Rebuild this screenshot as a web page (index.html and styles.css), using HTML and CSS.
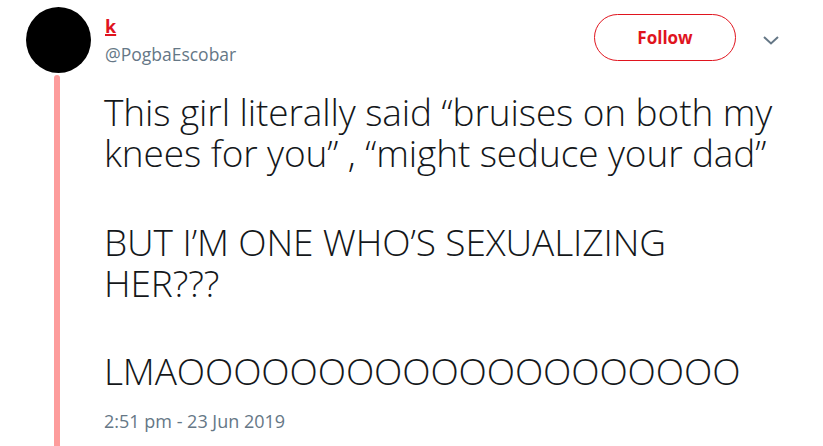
FILE: index.html
```html
<!DOCTYPE html>
<html>
<head>
<meta charset="utf-8">
<link rel="stylesheet" href="styles.css">
</head>
<body>
<div class="tweet">
  <div class="rail">
    <div class="avatar"></div>
    <div class="thread"></div>
  </div>
  <div class="main">
    <div class="header">
      <div class="who">
        <div class="name">k</div>
        <div class="handle">@PogbaEscobar</div>
      </div>
      <div class="actions">
        <button class="follow">Follow</button>
        <svg class="chev" width="16" height="9" viewBox="0 0 16 9"><polyline points="1,1 8,7.5 15,1" fill="none" stroke="#657786" stroke-width="2"/></svg>
      </div>
    </div>
    <div class="text">
      <p class="p1">This girl literally said “bruises on both my knees for you” , “might seduce your dad”</p>
      <p class="p2">BUT I’M ONE WHO’S SEXUALIZING HER???</p>
      <p class="p3">LMAOOOOOOOOOOOOOOOOOOOO</p>
    </div>
    <div class="time">2:51 pm - 23 Jun 2019</div>
  </div>
</div>
</body>
</html>
```

FILE: styles.css
```css
html, body {
  margin: 0;
  padding: 0;
  background: #ffffff;
}
body {
  font-family: "Open Sans", "Noto Sans", sans-serif;
  width: 823px;
  height: 446px;
  overflow: hidden;
}
.tweet {
  display: flex;
  height: 446px;
  padding-left: 26px;
  box-sizing: border-box;
}
.rail {
  width: 65px;
  display: flex;
  flex-direction: column;
  padding-top: 7px;
  flex: none;
}
.avatar {
  width: 65px;
  height: 66px;
  border-radius: 50%;
  background: #000;
}
.thread {
  width: 6px;
  margin-left: 28px;
  margin-top: 2px;
  flex: 1;
  background: #fd9c9c;
  border-radius: 3px 3px 0 0;
}
.main {
  flex: 1;
  padding-left: 13px;
  padding-right: 44px;
  padding-top: 14px;
}
.header {
  display: flex;
  justify-content: space-between;
  align-items: flex-start;
}
.who {
  padding-top: 1px;
  padding-left: 1px;
}
.name {
  font-size: 18px;
  line-height: 22px;
  font-weight: 700;
  color: #e0141e;
  text-decoration: underline;
  text-decoration-thickness: 2px;
  text-underline-offset: 1px;
}
.handle {
  margin-top: 7px;
  font-size: 17.5px;
  line-height: 20px;
  color: #657786;
}
.actions {
  display: flex;
  align-items: flex-start;
  gap: 27px;
}
.follow {
  width: 142px;
  height: 47px;
  box-sizing: border-box;
  border: 1px solid #e0141e;
  border-radius: 24px;
  background: #fff;
  color: #e0141e;
  font-family: "Open Sans", "Noto Sans", sans-serif;
  font-weight: 700;
  font-size: 17px;
  padding: 0;
}
.chev {
  display: block;
  margin-top: 22px;
}
.text {
  margin-top: 27px;
  font-size: 37px;
  font-weight: 350;
  letter-spacing: -0.1px;
  line-height: 41px;
  color: #14171a;
}
.text p {
  margin: 0;
}
.text .p2 {
  margin-top: 48px;
}
.text .p3 {
  margin-top: 47px;
}
.time {
  margin-top: 19px;
  font-size: 18px;
  line-height: 22px;
  color: #657786;
}
```
